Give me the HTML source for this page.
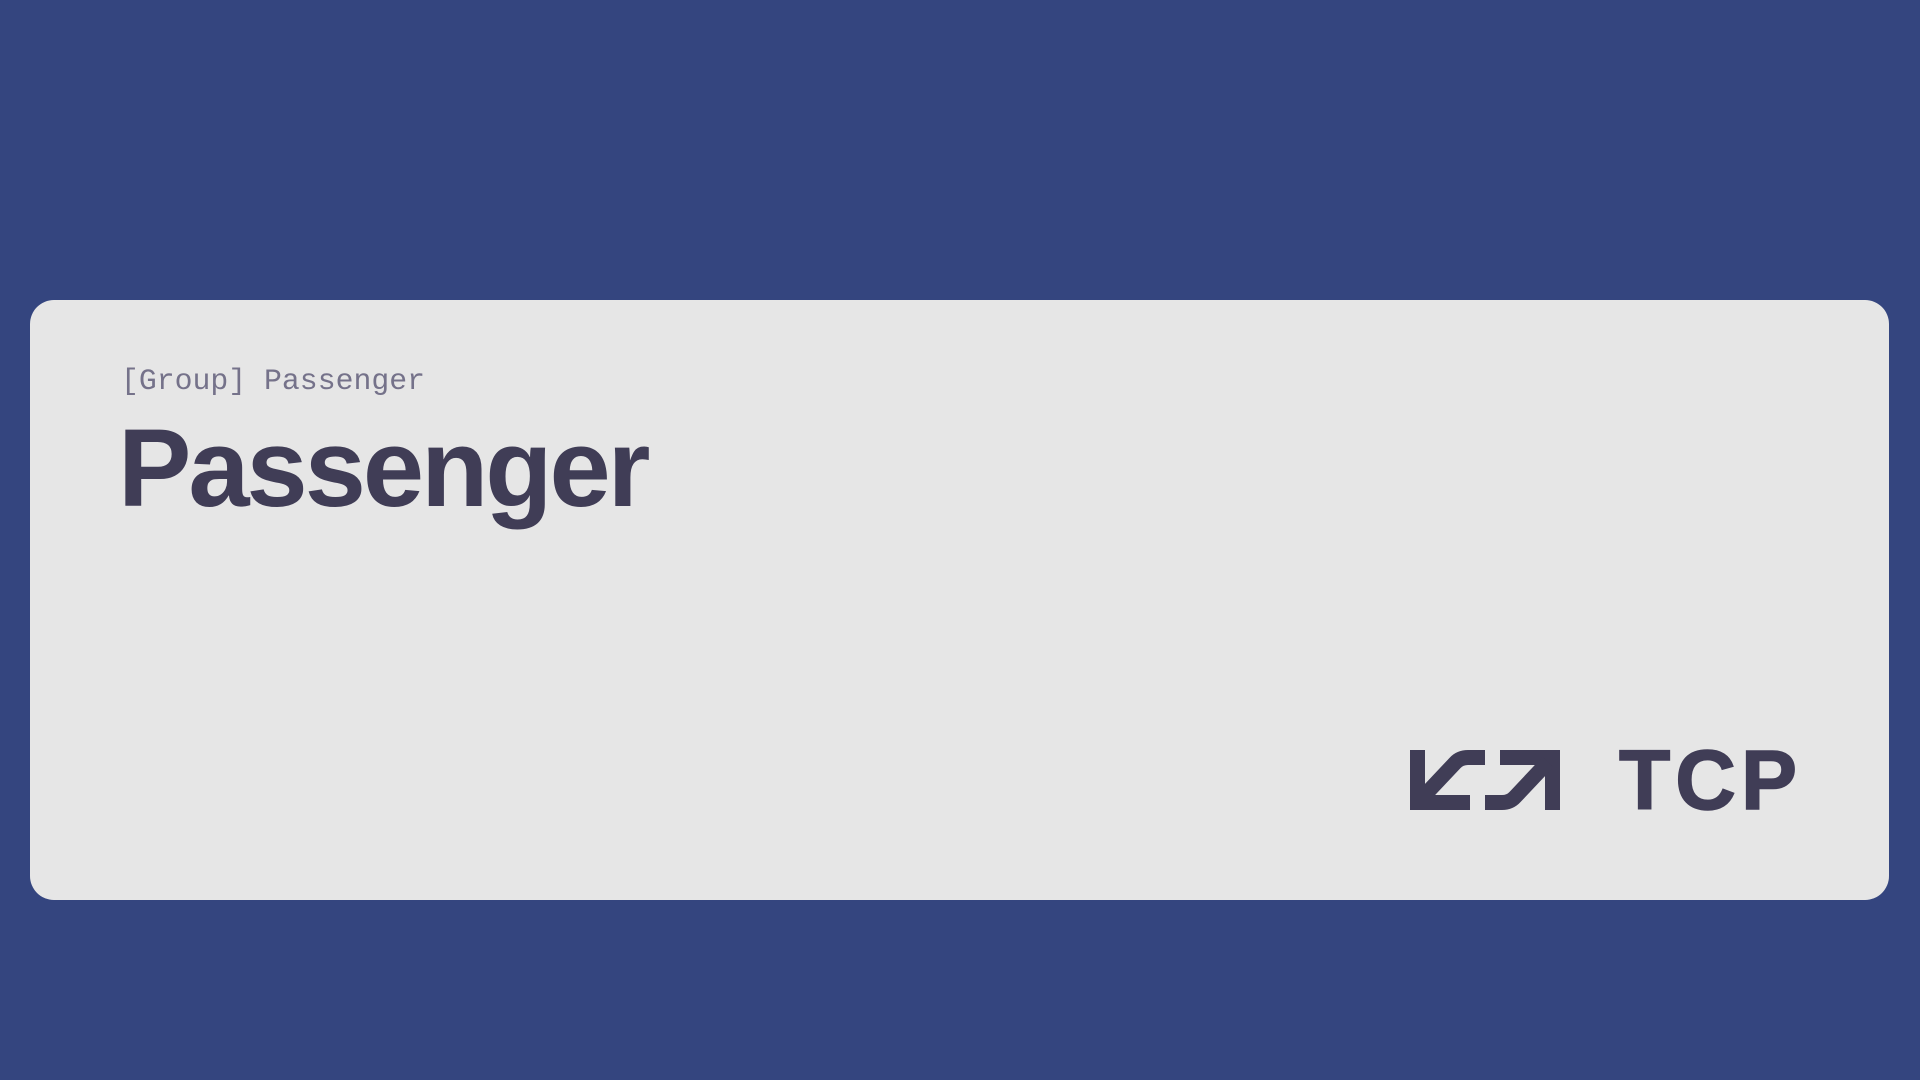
<!DOCTYPE html>
<html><head><style>
html,body{margin:0;width:1920px;height:1080px;background:#34457f;overflow:hidden}
.card{position:absolute;left:30px;top:300px;width:1859px;height:600px;background:#e6e6e6;border-radius:24px}
.sub{position:absolute;left:121px;top:361px;font:29.8px "Liberation Mono",monospace;color:#75728a;line-height:40px;white-space:nowrap}
.title{position:absolute;left:118px;top:404px;font:bold 110px "Liberation Sans",sans-serif;color:#403d56;letter-spacing:-3px;line-height:130px;white-space:nowrap}
.tcp{position:absolute;left:1619px;top:730px;font:bold 84px "Liberation Sans",sans-serif;color:#403d56;letter-spacing:5px;line-height:100px;-webkit-text-stroke:1.5px #403d56}
svg{position:absolute;left:1410px;top:750px}
</style></head><body>
<div class="card"></div>
<div class="sub">[Group] Passenger</div>
<div class="title">Passenger</div>
<svg width="150" height="60" viewBox="0 0 150 60"><g fill="none" stroke="#403d56" stroke-width="15" stroke-linejoin="miter">
<path d="M7.5,0 V52.5 H60"/>
<path d="M12,48 L45,13 Q50,7.5 58,7.5 H75"/>
<path d="M142.5,60 V7.5 H90"/>
<path d="M75,52.5 H92 Q100,52.5 105,47 L138,12"/>
</g></svg>
<div class="tcp">TCP</div>
</body></html>
